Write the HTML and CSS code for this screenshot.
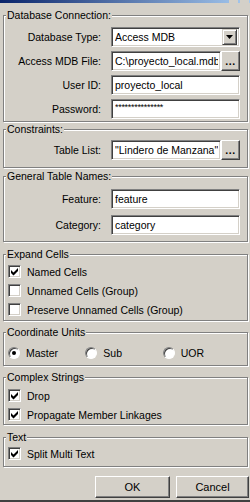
FILE: index.html
```html
<!DOCTYPE html>
<html>
	<head>
		<meta charset="UTF-8">
		<title>Import Options</title>
		<link rel="stylesheet" href="styles.css">
	</head>
	<body>
		<div class="window">
			<div class="caption">
				<span class="cap-btn"></span>
				<span class="cap-btn"></span>
			</div>
			<div class="content">
				<div class="group g1">
					<span class="legend">Database Connection:</span>
					<div class="row">
						<span class="lbl">Database Type:</span>
						<div class="field combo">
							<span class="val">Access MDB</span>
							<span class="drop"><svg width="7" height="4" viewBox="0 0 7 4"><polygon points="0,0 7,0 3.5,4" fill="#000"/></svg></span>
						</div>
					</div>
					<div class="row">
						<span class="lbl">Access MDB File:</span>
						<div class="field"><span class="val">C:\proyecto_local.mdb</span></div>
						<span class="btn dots">...</span>
					</div>
					<div class="row">
						<span class="lbl">User ID:</span>
						<div class="field"><span class="val">proyecto_local</span></div>
					</div>
					<div class="row">
						<span class="lbl">Password:</span>
						<div class="field"><span class="val pass">***************</span></div>
					</div>
				</div>

				<div class="group g2">
					<span class="legend">Constraints:</span>
					<div class="row">
						<span class="lbl">Table List:</span>
						<div class="field"><span class="val">"Lindero de Manzana"</span></div>
						<span class="btn dots">...</span>
					</div>
				</div>

				<div class="group g3">
					<span class="legend">General Table Names:</span>
					<div class="row">
						<span class="lbl">Feature:</span>
						<div class="field"><span class="val">feature</span></div>
					</div>
					<div class="row">
						<span class="lbl">Category:</span>
						<div class="field"><span class="val">category</span></div>
					</div>
				</div>

				<div class="group g4">
					<span class="legend">Expand Cells</span>
					<div class="check">
						<span class="box"><svg width="11" height="11" viewBox="0 0 11 11"><polygon points="2,4 4.5,6.5 9,2 9,5 4.5,9.5 2,7" fill="#000"/></svg></span>
						<span>Named Cells</span>
					</div>
					<div class="check">
						<span class="box"></span>
						<span>Unnamed Cells (Group)</span>
					</div>
					<div class="check">
						<span class="box"></span>
						<span>Preserve Unnamed Cells (Group)</span>
					</div>
				</div>

				<div class="group g5">
					<span class="legend">Coordinate Units</span>
					<div class="radios">
						<div class="radio"><span class="ring"><span class="dot"></span></span><span>Master</span></div>
						<div class="radio"><span class="ring"></span><span>Sub</span></div>
						<div class="radio"><span class="ring"></span><span>UOR</span></div>
					</div>
				</div>

				<div class="group g6">
					<span class="legend">Complex Strings</span>
					<div class="check">
						<span class="box"><svg width="11" height="11" viewBox="0 0 11 11"><polygon points="2,4 4.5,6.5 9,2 9,5 4.5,9.5 2,7" fill="#000"/></svg></span>
						<span>Drop</span>
					</div>
					<div class="check">
						<span class="box"><svg width="11" height="11" viewBox="0 0 11 11"><polygon points="2,4 4.5,6.5 9,2 9,5 4.5,9.5 2,7" fill="#000"/></svg></span>
						<span>Propagate Member Linkages</span>
					</div>
				</div>

				<div class="group g7">
					<span class="legend">Text</span>
					<div class="check">
						<span class="box"><svg width="11" height="11" viewBox="0 0 11 11"><polygon points="2,4 4.5,6.5 9,2 9,5 4.5,9.5 2,7" fill="#000"/></svg></span>
						<span>Split Multi Text</span>
					</div>
				</div>

				<div class="buttons">
					<span class="btn push ok">OK</span>
					<span class="btn push cancel">Cancel</span>
				</div>
			</div>
		</div>
	</body>
</html>
```

FILE: styles.css
```css
*{
	margin: 0;
	padding: 0;
	box-sizing: border-box;
}
body{
	width: 250px;
	height: 502px;
	overflow: hidden;
	background: #d4d0c8;
	font-family: "Liberation Sans", Arial, sans-serif;
	font-size: 10.5px;
	color: #000;
}
.window{
	height: 502px;
	border-bottom: 2px solid #404040;
	display: flex;
	flex-direction: column;
}
.caption{
	height: 3px;
	background: linear-gradient(to right, #0a246a, #a6caf0);
	display: flex;
	justify-content: flex-end;
	gap: 2px;
	padding-right: 1px;
}
.cap-btn{
	width: 9px;
	height: 3px;
	background: #d4d0c8;
}
.content{
	display: flex;
	flex-direction: column;
	padding: 0 2px 0 3px;
}

/* group boxes */
.group{
	border: 1px solid #808080;
	box-shadow: inset 1px 1px 0 #fff, 1px 1px 0 #fff;
	padding: 0 7px 2px 4px;
	display: flex;
	flex-direction: column;
}
.legend{
	align-self: flex-start;
	margin: -7px 0 2px -2px;
	padding: 0 1px;
	line-height: 12px;
	background: #d4d0c8;
	white-space: nowrap;
}
.g1{ margin-top: 12px; gap: 4px; padding-bottom: 2px; }
.g2{ margin-top: 7px; padding-bottom: 7px; }
.g2 .legend{ margin-bottom: 5px; }
.g3{ margin-top: 8px; gap: 6px; padding-bottom: 6px; }
.g3 .legend{ margin-bottom: 1px; }
.g4{ margin-top: 12px; gap: 6px; padding-bottom: 4px; }
.g4 .legend{ margin-bottom: -1px; }
.g5{ margin-top: 11px; padding-bottom: 6px; }
.g5 .legend{ margin-bottom: 8px; }
.g6{ margin-top: 11px; gap: 6px; padding-bottom: 3px; }
.g6 .legend{ margin-bottom: 0; }
.g7{ margin-top: 12px; padding-bottom: 6px; }
.g7 .legend{ margin-bottom: 4px; }

/* label + edit rows */
.row{
	display: flex;
	height: 20px;
	align-items: stretch;
}
.lbl{
	width: 93px;
	margin-right: 10px;
	text-align: right;
	white-space: nowrap;
	display: flex;
	align-items: center;
	justify-content: flex-end;
}
.field{
	flex: 1;
	min-width: 0;
	background: #fff;
	border: 1px solid;
	border-color: #808080 #fff #fff #808080;
	box-shadow: inset 1px 1px 0 #404040, inset -1px -1px 0 #d4d0c8;
	display: flex;
	align-items: center;
	overflow: hidden;
	padding: 0 2px 0 3px;
}
.val{
	white-space: nowrap;
	flex: 1;
	min-width: 0;
	overflow: hidden;
}
.pass{
	font-size: 9px;
	align-self: flex-start;
	margin-top: 2px;
	letter-spacing: -0.3px;
}
.combo{
	padding-right: 2px;
}
.drop{
	width: 15px;
	height: 16px;
	background: #d4d0c8;
	border: 1px solid;
	border-color: #d4d0c8 #404040 #404040 #d4d0c8;
	box-shadow: inset 1px 1px 0 #fff, inset -1px -1px 0 #808080;
	display: flex;
	align-items: center;
	justify-content: center;
}

/* buttons */
.btn{
	background: #d4d0c8;
	border: 1px solid;
	border-color: #fff #404040 #404040 #fff;
	box-shadow: inset -1px -1px 0 #808080, inset 1px 1px 0 #d4d0c8;
	display: flex;
	align-items: center;
	justify-content: center;
}
.dots{
	width: 19px;
	font-weight: bold;
	align-items: flex-end;
	padding-bottom: 5px;
	letter-spacing: 0.5px;
	line-height: 8px;
}
.buttons{
	display: flex;
	justify-content: flex-end;
	gap: 6px;
	margin-top: 9px;
	margin-right: -1px;
}
.push{
	height: 22px;
	font-size: 11px;
}
.ok{
	width: 75px;
}
.cancel{
	width: 73px;
}

/* checkboxes and radios */
.check{
	display: flex;
	align-items: center;
	height: 13px;
	gap: 6px;
	white-space: nowrap;
}
.box{
	width: 13px;
	height: 13px;
	background: #fff;
	border: 1px solid;
	border-color: #808080 #fff #fff #808080;
	box-shadow: inset 1px 1px 0 #404040, inset -1px -1px 0 #d4d0c8;
	display: flex;
}
.radios{
	display: flex;
}
.radio{
	width: 80px;
	height: 13px;
	display: flex;
	align-items: center;
	gap: 6px;
}
.ring{
	width: 12px;
	height: 12px;
	border-radius: 50%;
	background: #fff;
	border: 1px solid;
	border-color: #808080 #fff #fff #808080;
	box-shadow: inset 1px 1px 0 #404040;
	display: flex;
	align-items: center;
	justify-content: center;
}
.dot{
	width: 4px;
	height: 4px;
	border-radius: 50%;
	background: #000;
}
```
